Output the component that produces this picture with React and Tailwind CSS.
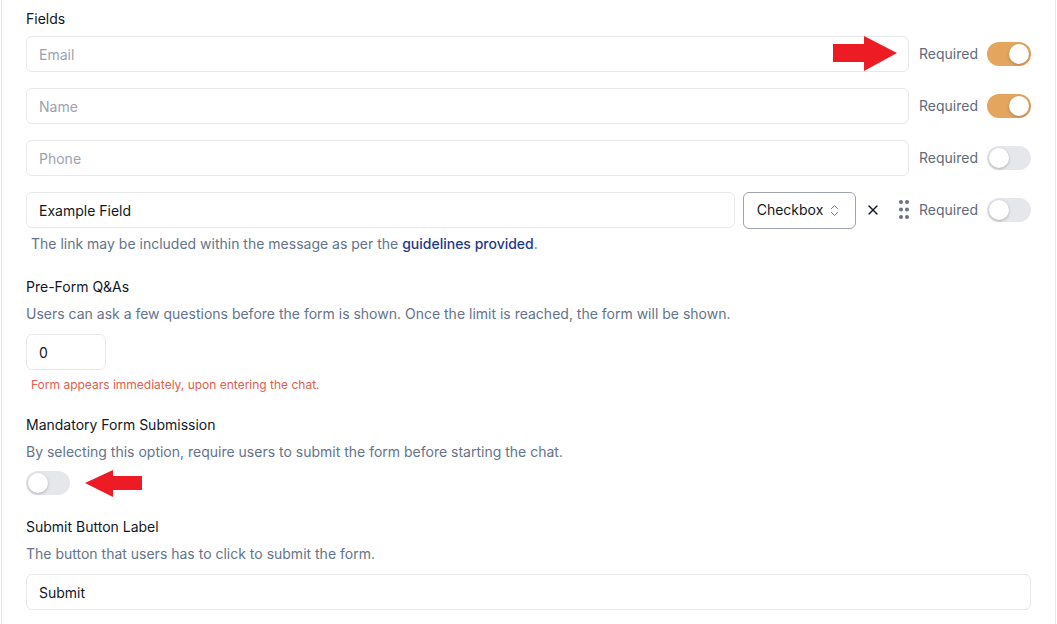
import { X, ChevronsUpDown } from 'lucide-react'

const fields = [
  { id: 'email', placeholder: 'Email', required: true },
  { id: 'name', placeholder: 'Name', required: true },
  { id: 'phone', placeholder: 'Phone', required: false },
]

const Toggle = ({ on }) => (
  <div
    className={`relative h-6 w-11 shrink-0 rounded-full ${on ? 'bg-[#e4a55f]' : 'bg-[#e5e7eb]'}`}
  >
    <div
      className={`absolute top-[2px] h-5 w-5 rounded-full bg-white shadow-[0_1px_3px_rgba(0,0,0,0.25)] ${
        on ? 'left-[22px]' : 'left-[2px]'
      }`}
    />
  </div>
)

const RequiredSwitch = ({ on }) => (
  <div className="ml-[10px] flex shrink-0 items-center gap-[9px]">
    <span className="text-sm text-[#5f6b7a]">Required</span>
    <Toggle on={on} />
  </div>
)

const RedArrowRight = () => (
  <svg className="pointer-events-none absolute left-[833px] top-[36px]" width="65" height="36" viewBox="0 0 65 36">
    <polygon points="0,8 31,8 31,0 64,17 31,35 31,26 0,26" fill="#ed1c24" />
  </svg>
)

const RedArrowLeft = () => (
  <svg className="pointer-events-none absolute left-[85px] top-[470px]" width="58" height="28" viewBox="0 0 58 28">
    <polygon points="0,13 28,0 28,6 57,6 57,20 28,20 28,27" fill="#ed1c24" />
  </svg>
)

const GripDots = () => (
  <svg width="10" height="20" viewBox="0 0 10 20" className="shrink-0">
    {[2, 9.5, 17].map((cy) => (
      <g key={cy}>
        <circle cx="2" cy={cy} r="2" fill="#6b7280" />
        <circle cx="8" cy={cy} r="2" fill="#6b7280" />
      </g>
    ))}
  </svg>
)

const inputClass =
  'h-9 rounded-md border border-[#e8e8e8] bg-white px-3 text-sm text-[#111827] placeholder:text-[#9ca3af] outline-none'

export default function App() {
  return (
    <div
      className="relative min-h-[624px] bg-white"
      style={{ fontFamily: 'Inter, "Noto Sans", sans-serif' }}
    >
      <div className="ml-px mr-px min-h-[624px] border-x border-[#e5e7eb] pl-6 pr-6 pt-[9px]">
        <p className="text-sm leading-5 text-[#111827]">Fields</p>

        <div className="mt-[7px] flex flex-col gap-4">
          {fields.map((f) => (
            <div key={f.id} className="flex items-center">
              <input className={`${inputClass} min-w-0 flex-1`} placeholder={f.placeholder} />
              <RequiredSwitch on={f.required} />
            </div>
          ))}

          <div className="flex h-9 items-center">
            <input className={`${inputClass} min-w-0 flex-1`} defaultValue="Example Field" />
            <button className="ml-2 flex h-[37px] w-[113px] shrink-0 items-center justify-center gap-1 rounded-md border border-[#9ca3af] bg-white text-sm text-[#111827]">
              Checkbox
              <ChevronsUpDown size={15} strokeWidth={1.5} className="text-[#6b7280]" />
            </button>
            <X size={16} strokeWidth={2} className="ml-[9px] shrink-0 text-[#111827]" />
            <span className="ml-[18px]">
              <GripDots />
            </span>
            <RequiredSwitch on={false} />
          </div>
        </div>

        <p className="mt-[6px] pl-[5px] text-sm leading-5 text-[#64748b]">
          The link may be included within the message as per the{' '}
          <span className="font-medium text-[#1e3a8a]">guidelines provided</span>.
        </p>

        <p className="mt-[23px] text-sm leading-5 text-[#111827]">Pre-Form Q&amp;As</p>
        <p className="mt-[7px] text-sm leading-5 text-[#64748b]">
          Users can ask a few questions before the form is shown. Once the limit is reached, the form will be shown.
        </p>
        <input className={`${inputClass} mt-[10px] block w-[80px]`} defaultValue="0" />
        <p className="mt-[7px] pl-[5px] text-xs leading-4 text-[#e0604e]">
          Form appears immediately, upon entering the chat.
        </p>

        <p className="mt-[22px] text-sm leading-5 text-[#111827]">Mandatory Form Submission</p>
        <p className="mt-[7px] text-sm leading-5 text-[#64748b]">
          By selecting this option, require users to submit the form before starting the chat.
        </p>
        <div className="mt-[9px]">
          <Toggle on={false} />
        </div>

        <p className="mt-[22px] text-sm leading-5 text-[#111827]">Submit Button Label</p>
        <p className="mt-[7px] text-sm leading-5 text-[#64748b]">
          The button that users has to click to submit the form.
        </p>
        <input className={`${inputClass} mt-[10px] block w-full`} defaultValue="Submit" />
      </div>

      <RedArrowRight />
      <RedArrowLeft />
    </div>
  )
}
